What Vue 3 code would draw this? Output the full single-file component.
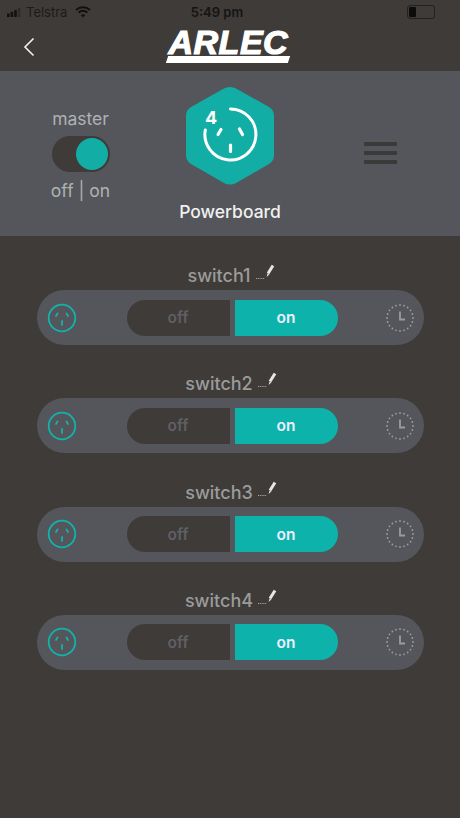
<script setup>
const switches = ['switch1', 'switch2', 'switch3', 'switch4']
const dots = Array.from({ length: 20 }, (_, i) => {
  const a = (i / 20) * Math.PI * 2
  return { x: 14 + 13 * Math.cos(a), y: 14 + 13 * Math.sin(a) }
})
</script>

<template>
  <div class="screen">
    <div class="status">
      <div class="status-left">
        <svg class="signal" width="14" height="9" viewBox="0 0 14 9">
          <rect x="0" y="5.5" width="2.6" height="3.5" rx="0.6" fill="#111" />
          <rect x="3.6" y="3.8" width="2.6" height="5.2" rx="0.6" fill="#111" />
          <rect x="7.2" y="2" width="2.6" height="7" rx="0.6" fill="#111" />
          <rect x="10.8" y="0" width="2.6" height="9" rx="0.6" fill="#222" opacity="0.55" />
        </svg>
        <span class="carrier">Telstra</span>
        <svg class="wifi" width="16" height="12" viewBox="0 0 16 12">
          <path d="M1 4 C5 0.4 11 0.4 15 4" fill="none" stroke="#111" stroke-width="1.9" />
          <path d="M3.6 6.6 C6.2 4.4 9.8 4.4 12.4 6.6" fill="none" stroke="#111" stroke-width="1.9" />
          <path d="M8 11.6 L5.7 9 C7 7.9 9 7.9 10.3 9 Z" fill="#111" />
        </svg>
      </div>
      <span class="time">5:49 pm</span>
      <div class="battery"><span class="battery-level"></span></div>
    </div>

    <header class="nav">
      <svg class="back" width="12" height="20" viewBox="0 0 12 20">
        <path d="M10.5 1.5 L2 10 L10.5 18.5" fill="none" stroke="#f2f2f2" stroke-width="1.6" />
      </svg>
      <div class="logo">
        <span class="logo-text">ARLEC</span>
        <span class="logo-bar"></span>
      </div>
    </header>

    <section class="panel">
      <div class="master">
        <span>master</span>
        <div class="toggle"><span class="knob"></span></div>
        <span>off | on</span>
      </div>
      <div class="device">
        <div class="hex-wrap">
          <svg width="90" height="100" viewBox="0 0 90 100">
            <path d="M39 2.5 Q45 -0.5 51 2.5 L84 21 Q89 24 89 30 L89 69 Q89 75 84 78 L51 97 Q45 100 39 97 L6 78 Q1 75 1 69 L1 30 Q1 24 6 21 Z" fill="#12aea6" />
            <path d="M45.500 23 A25.500 25.500 0 1 1 20.300 44" fill="none" stroke="#fff" stroke-width="3" stroke-linecap="round" />
            <path d="M36 43.500 L33 48.500 M54.500 43 L57.500 48.500 M45.500 59 L45.500 65.500" stroke="#fff" stroke-width="3.200" stroke-linecap="round" />
            <text x="26" y="38" class="hex-num">4</text>
          </svg>
        </div>
        <span class="device-name">Powerboard</span>
      </div>
      <div class="menu"><span></span><span></span><span></span></div>
    </section>

    <section class="list">
      <div v-for="name in switches" :key="name" class="item">
        <div class="item-label">
          <span>{{ name }}</span>
          <svg class="pencil" width="20" height="18" viewBox="0 0 20 18">
            <path d="M13 10.500 L18 2.500" stroke="#e6e6e6" stroke-width="3" />
            <path d="M11.500 14 L12.500 10.500 L14.500 11.500 Z" fill="#ddd" />
            <path d="M1 15.500 H10" stroke="#aaa" stroke-width="1" stroke-dasharray="1.200 1" />
          </svg>
        </div>
        <div class="row">
          <svg class="outlet" width="30" height="30" viewBox="0 0 30 30">
            <circle cx="15" cy="15" r="13.300" fill="none" stroke="#12b3ab" stroke-width="1.800" />
            <path d="M10.500 10.500 L9 13 M19.500 10.500 L21 13 M15 18 L15 22" stroke="#12b3ab" stroke-width="1.800" stroke-linecap="round" />
          </svg>
          <div class="segments">
            <div class="seg seg-off">off</div>
            <div class="seg seg-on">on</div>
          </div>
          <svg class="clock" width="28" height="28" viewBox="0 0 28 28">
            <circle v-for="(d, i) in dots" :key="i" :cx="d.x" :cy="d.y" r="0.900" fill="#9a9ca0" />
            <path d="M14 7.500 V15.500 H19" fill="none" stroke="#9a9ca0" stroke-width="1.800" />
          </svg>
        </div>
      </div>
    </section>
  </div>
</template>

<style>
html, body { margin: 0; background: #3e3b39; }
</style>

<style scoped>
.screen {
  width: 460px;
  height: 818px;
  background: #3e3b39;
  font-family: "Inter", "Liberation Sans", sans-serif;
  overflow: hidden;
}
.status {
  height: 24px;
  padding: 0 33px 0 7px;
  display: grid;
  grid-template-columns: 1fr auto 1fr;
  align-items: center;
  color: #141414;
  font-size: 13px;
}
.status-left { display: flex; align-items: center; gap: 5px; }
.carrier { color: #1c1c1c; }
.wifi { margin-left: 3px; }
.time { font-weight: 600; }
.battery {
  justify-self: end;
  width: 24px;
  height: 10px;
  border: 1px solid #222;
  border-radius: 3px;
  padding: 1px;
  box-sizing: content-box;
  margin-right: -8px;
}
.battery-level { display: block; width: 7px; height: 10px; background: #0c0c0c; border-radius: 1px; }
.nav {
  height: 47px;
  display: flex;
  justify-content: center;
  position: relative;
}
.back { position: absolute; left: 23px; top: 13px; }
.logo {
  margin-left: -1px;
  margin-top: 5px;
  width: 128px;
  display: flex;
  flex-direction: column;
  align-items: flex-start;
}
.logo-text {
  font-family: "Liberation Sans", sans-serif;
  font-weight: 700;
  font-style: italic;
  font-size: 34px;
  line-height: 27px;
  height: 27px;
  color: #fff;
  letter-spacing: 0.5px;
  -webkit-text-stroke: 1.2px #fff;
  margin-left: 3px;
  white-space: nowrap;
}
.logo-bar {
  display: block;
  width: 122px;
  height: 7px;
  background: #fff;
  transform: skewX(-18deg);
  margin-left: 1px;
}
.panel {
  height: 165px;
  background: #54565b;
  display: grid;
  grid-template-columns: 160px 140px 1fr;
  color: #c8c9cb;
}
.master {
  padding-left: 1px;
  padding-top: 37px;
  display: flex;
  flex-direction: column;
  align-items: center;
  font-size: 17.5px;
  color: #b0b1b3;
  line-height: 21px;
}
.toggle {
  width: 58px;
  height: 36px;
  margin: 7px 0 8px;
  border-radius: 18px;
  background: #3e3b39;
  display: flex;
  justify-content: flex-end;
  align-items: center;
  padding-right: 2px;
  box-sizing: border-box;
}
.knob { width: 32px; height: 32px; border-radius: 50%; background: #12aea6; }
.device {
  padding-top: 15px;
  display: flex;
  flex-direction: column;
  align-items: center;
}
.hex-wrap { height: 100px; }
.hex-num { font-family: "Inter", sans-serif; font-weight: 700; font-size: 18px; fill: #fff; text-anchor: middle; }
.device-name { margin-top: 14px; font-size: 17.5px; font-weight: 500; color: #f0f0f0; line-height: 24px; }
.menu {
  padding: 71px 0 0 64px;
  display: flex;
  flex-direction: column;
  gap: 5px;
}
.menu span { display: block; width: 33px; height: 4px; background: #3a3a38; }
.list { padding-top: 25px; }
.item { height: 108.300px; display: flex; flex-direction: column; align-items: center; }
.item-label {
  height: 29px;
  display: flex;
  align-items: center;
  gap: 4px;
  font-size: 18px;
  font-weight: 500;
  color: #9b9b9b;
  margin-left: 2px;
}
.pencil { margin-top: -7px; }
.row {
  width: 387px;
  height: 55px;
  background: #54565b;
  border-radius: 28px;
  margin-top: 0;
  display: flex;
  align-items: center;
  justify-content: space-between;
  padding: 0 10px;
  box-sizing: border-box;
}
.segments { display: flex; gap: 5px; margin-left: 2px; }
.seg {
  width: 103px;
  height: 36px;
  display: flex;
  align-items: center;
  justify-content: center;
  font-size: 15.500px;
  font-weight: 600;
}
.seg-off { background: #3e3b39; color: #5f6064; border-radius: 18px 0 0 18px; }
.seg-on { background: #0db3ab; color: #eef; border-radius: 0 18px 18px 0; }
</style>
